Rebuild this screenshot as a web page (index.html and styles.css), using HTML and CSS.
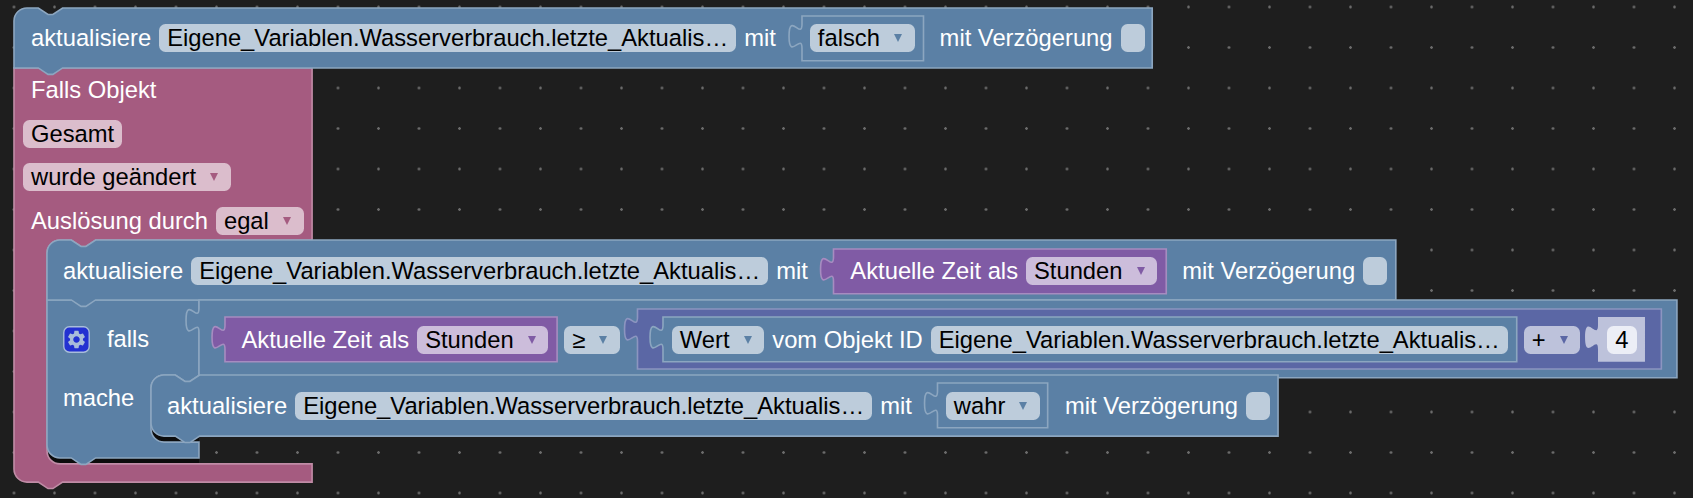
FILE: index.html
```html
<!DOCTYPE html>
<html lang="de">
<head>
    <meta charset="UTF-8">
    <title>Blockly Arbeitsfläche</title>
    <link rel="stylesheet" href="styles.css">
</head>
<body>
    <div class="workspace">
        <!-- Blockformen, Maße in Blockly-Einheiten (Zoom 1.62) -->
        <svg class="shapes" width="1693" height="498">
            <rect class="gap" x="47" y="445" width="152" height="20"/>
            <rect class="gap" x="151" y="425" width="48" height="18"/>

            <path class="pink" transform="translate(14 68) scale(1.62)" d="M0,0 H184 V106.2 H50.4 l-6,4 -3,0 -6,-4 H28.4 a8,8 0 0,0 -8,8 V236.4 a8,8 0 0,0 8,8 H184 V255.6 H30 l-6,4 -3,0 -6,-4 H8 a8,8 0 0,1 -8,-8 z"/>
            <path class="steel" transform="translate(14 8) scale(1.62)" d="M0,8 a8,8 0 0,1 8,-8 H15 l6,4 3,0 6,-4 H702.6 V37 H30 l-6,4 -3,0 -6,-4 H0 z"/>
            <path class="outline" transform="translate(802 16) scale(1.62)" d="M0,0 H75 V27.6 H0 V20 c0,-10 -8,8 -8,-7.5 s8,2.5 8,-7.5 z"/>

            <path class="steel" transform="translate(47 300) scale(1.62)" d="M0,0 H93.8 V46.3 H94.2 l-6,4 -3,0 -6,-4 H72.2 a8,8 0 0,0 -8,8 V79.7 a8,8 0 0,0 8,8 H93.8 V97.5 H30 l-6,4 -3,0 -6,-4 H8 a8,8 0 0,1 -8,-8 z"/>
            <path class="steel" transform="translate(47 240) scale(1.62)" d="M0,8 a8,8 0 0,1 8,-8 H15 l6,4 3,0 6,-4 H832.6 V37 H30 l-6,4 -3,0 -6,-4 H0 z"/>
            <path class="purple" transform="translate(833.5 249) scale(1.62)" d="M0,0 H205.4 V27.6 H0 V20 c0,-10 -8,8 -8,-7.5 s8,2.5 8,-7.5 z"/>

            <path class="steel" transform="translate(199 300) scale(1.62)" d="M0,0 H912.3 V48 H0 V20 c0,-10 -8,8 -8,-7.5 s8,2.5 8,-7.5 z"/>
            <path class="purple" transform="translate(225 317) scale(1.62)" d="M0,0 H205 V27.6 H0 V20 c0,-10 -8,8 -8,-7.5 s8,2.5 8,-7.5 z"/>
            <path class="indigo" transform="translate(637.5 309) scale(1.62)" d="M0,0 H632 V37 H0 V20 c0,-10 -8,8 -8,-7.5 s8,2.5 8,-7.5 z"/>
            <path class="steel" transform="translate(663 317) scale(1.62)" d="M0,0 H527 V27.6 H0 V20 c0,-10 -8,8 -8,-7.5 s8,2.5 8,-7.5 z"/>
            <path class="number" transform="translate(1598 317) scale(1.62)" d="M0,0 H29 V27.6 H0 V20 c0,-10 -8,8 -8,-7.5 s8,2.5 8,-7.5 z"/>

            <path class="steel" transform="translate(151 375) scale(1.62)" d="M0,8 a8,8 0 0,1 8,-8 H15 l6,4 3,0 6,-4 H695.7 V37.7 H30 l-6,4 -3,0 -6,-4 H8 a8,8 0 0,1 -8,-8 z"/>
            <path class="outline" transform="translate(937.5 383) scale(1.62)" d="M0,0 H68 V27.6 H0 V20 c0,-10 -8,8 -8,-7.5 s8,2.5 8,-7.5 z"/>
        </svg>

        <div class="row row-first">
            <span class="label">aktualisiere</span>
            <span class="field long-field">Eigene_Variablen.Wasserverbrauch.letzte_Aktualis…</span>
            <span class="label">mit</span>
            <span class="value">
                <span class="field dropdown">falsch<i class="arrow"></i></span>
            </span>
            <span class="label">mit Verzögerung</span>
            <span class="field checkbox"></span>
        </div>

        <div class="trigger">
            <div class="row-static"><span class="label indented">Falls Objekt</span></div>
            <div class="row-static"><span class="field field-pink">Gesamt</span></div>
            <div class="row-static"><span class="field field-pink dropdown">wurde geändert<i class="arrow arrow-pink"></i></span></div>
            <div class="row-static">
                <span class="label indented">Auslösung durch</span>
                <span class="field field-pink dropdown">egal<i class="arrow arrow-pink"></i></span>
            </div>
        </div>

        <div class="row row-second">
            <span class="label">aktualisiere</span>
            <span class="field long-field">Eigene_Variablen.Wasserverbrauch.letzte_Aktualis…</span>
            <span class="label">mit</span>
            <span class="value value-time">
                <span class="label">Aktuelle Zeit als</span>
                <span class="field field-purple dropdown">Stunden<i class="arrow arrow-purple"></i></span>
            </span>
            <span class="label">mit Verzögerung</span>
            <span class="field checkbox"></span>
        </div>

        <div class="row row-falls">
            <svg class="gear" viewBox="0 0 24 24" width="27" height="27">
                <rect class="gear-box" x="0.7" y="0.7" width="22.6" height="22.6" rx="5"/>
                <path class="gear-wheel" transform="translate(2.4 2.4) scale(0.8)" d="M19.14 12.94c.04-.3.06-.61.06-.94 0-.32-.02-.64-.07-.94l2.03-1.58a.49.49 0 0 0 .12-.61l-1.92-3.32a.488.488 0 0 0-.59-.22l-2.39.96c-.5-.38-1.03-.7-1.62-.94l-.36-2.54a.484.484 0 0 0-.48-.41h-3.84c-.24 0-.43.17-.47.41l-.36 2.54c-.59.24-1.13.57-1.62.94l-2.39-.96c-.22-.08-.47 0-.59.22L2.74 8.87c-.12.21-.08.47.12.61l2.03 1.58c-.05.3-.09.63-.09.94s.02.64.07.94l-2.03 1.58a.49.49 0 0 0-.12.61l1.92 3.32c.12.22.37.29.59.22l2.39-.96c.5.38 1.03.7 1.62.94l.36 2.54c.05.24.24.41.48.41h3.84c.24 0 .44-.17.47-.41l.36-2.54c.59-.24 1.13-.56 1.62-.94l2.39.96c.22.08.47 0 .59-.22l1.92-3.32c.12-.22.07-.47-.12-.61l-2.01-1.58zM12 15.6c-1.98 0-3.6-1.62-3.6-3.6s1.62-3.6 3.6-3.6 3.6 1.62 3.6 3.6-1.62 3.6-3.6 3.6z"/>
            </svg>
            <span class="label falls-label">falls</span>
        </div>

        <div class="row row-compare">
            <span class="label">Aktuelle Zeit als</span>
            <span class="field field-purple dropdown">Stunden<i class="arrow arrow-purple"></i></span>
            <span class="field operator dropdown">≥<i class="arrow"></i></span>
            <span class="field dropdown slot-math">Wert<i class="arrow"></i></span>
            <span class="label">vom Objekt ID</span>
            <span class="field long-field">Eigene_Variablen.Wasserverbrauch.letzte_Aktualis…</span>
            <span class="field field-indigo operator dropdown">+<i class="arrow arrow-indigo"></i></span>
            <span class="field field-number">4</span>
        </div>

        <div class="row row-mache"><span class="label">mache</span></div>

        <div class="row row-inner">
            <span class="label">aktualisiere</span>
            <span class="field long-field">Eigene_Variablen.Wasserverbrauch.letzte_Aktualis…</span>
            <span class="label">mit</span>
            <span class="value">
                <span class="field dropdown">wahr<i class="arrow"></i></span>
            </span>
            <span class="label">mit Verzögerung</span>
            <span class="field checkbox"></span>
        </div>
    </div>
</body>
</html>
```
FILE: styles.css
```css
html, body {
    margin: 0;
    height: 100%;
    background-color: #1e1e1e;
    overflow: hidden;
}
.workspace {
    position: relative;
    width: 1693px;
    height: 498px;
    font-family: "Liberation Sans", Arial, sans-serif;
    font-size: 23.76px;
    background-image: radial-gradient(circle at 1.5px 1.5px, #6b6b6b 1px, transparent 1.6px);
    background-size: 40.5px 40.5px;
    background-position: 12.5px 5.5px;
}
.shapes {
    position: absolute;
    left: 0;
    top: 0;
}

/* Blockfarben */
.steel { fill: #5b80a5; stroke: #8ca6c0; }
.pink { fill: #a55b80; stroke: #c08ca6; }
.purple { fill: #805ba5; stroke: #a68cc0; }
.indigo { fill: #5b67a5; stroke: #8c95c0; }
.outline { fill: #5b80a5; stroke: #8ca6c0; }
.number { fill: #bdc2db; stroke: none; }
.gap { fill: #0c0c0c; }

/* Zeilen */
.row, .row-static {
    display: flex;
    align-items: center;
    gap: 8px;
    height: 28px;
}
.row {
    position: absolute;
}
.row-first { left: 31px; top: 24px; }
.row-second { left: 63px; top: 257px; }
.row-falls { left: 62.5px; top: 325px; }
.row-compare { left: 241.5px; top: 326px; }
.row-mache { left: 63px; top: 384px; }
.row-inner { left: 167px; top: 392px; }

.trigger {
    position: absolute;
    left: 23px;
    top: 76px;
    display: flex;
    flex-direction: column;
    gap: 15.6px;
}

.label {
    color: #fff;
    white-space: nowrap;
}
.indented {
    margin-left: 8px;
}
.falls-label {
    margin-left: 9.5px;
}
.value {
    display: flex;
    align-items: center;
    gap: 8px;
    margin: 0 17px 0 26px;
}
.value-time {
    padding-left: 8.5px;
}

/* Felder */
.field {
    display: flex;
    align-items: center;
    box-sizing: border-box;
    height: 28px;
    padding: 0 8px;
    border-radius: 6.5px;
    background-color: #bdccdb;
    color: #000;
    white-space: nowrap;
}
.field-pink { background-color: #dbbdcc; }
.field-purple { background-color: #ccbddb; }
.field-indigo { background-color: #bdc2db; }
.field-number {
    background-color: #eceef6;
    margin-left: 19px;
}
.dropdown {
    padding-right: 12.7px;
}
.operator {
    margin-left: 8px;
}
.slot-math {
    margin-left: 43.8px;
}
.checkbox {
    width: 24px;
    padding: 0;
}
.arrow {
    width: 0;
    height: 0;
    margin-left: 14px;
    border-left: 4.5px solid transparent;
    border-right: 4.5px solid transparent;
    border-top: 8px solid #5b80a5;
}
.arrow-pink { border-top-color: #a55b80; }
.arrow-purple { border-top-color: #805ba5; }
.arrow-indigo { border-top-color: #5b67a5; }

.gear {
    flex: none;
}
.gear-box {
    fill: #2331d1;
    stroke: #a9bdda;
    stroke-width: 1.2;
}
.gear-wheel {
    fill: #a9bdda;
}
```
